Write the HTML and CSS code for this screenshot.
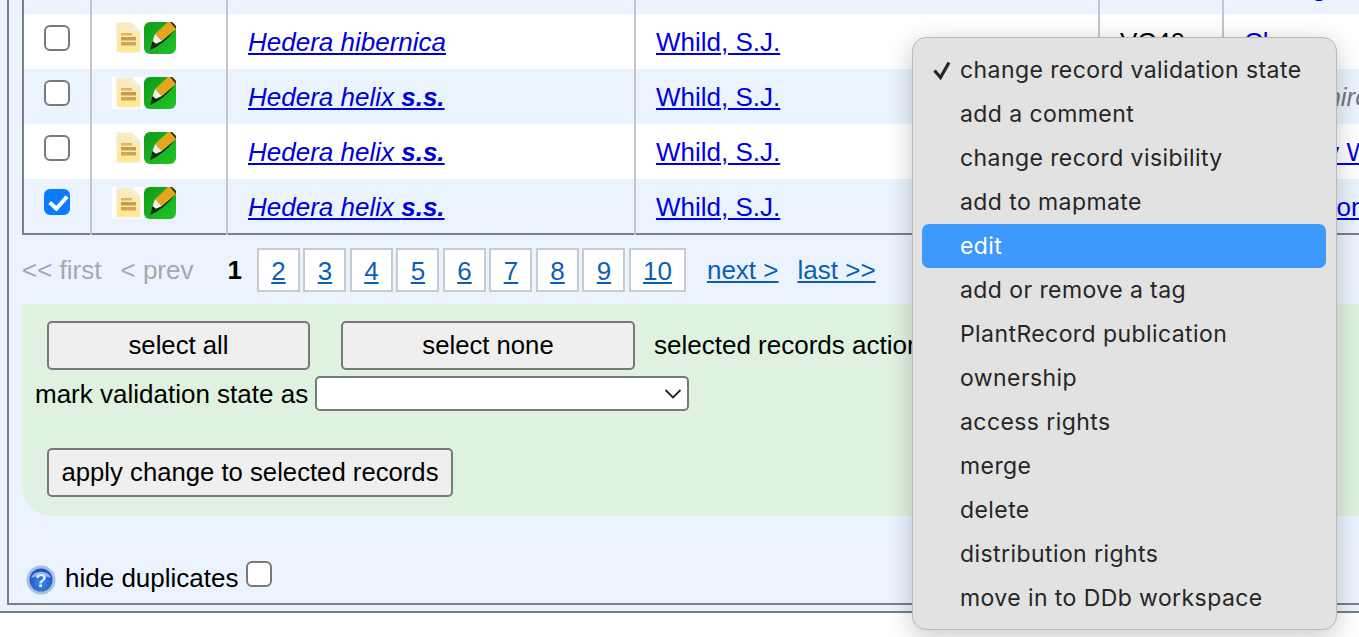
FILE: index.html
```html
<!DOCTYPE html>
<html lang="en">
<head>
  <meta charset="UTF-8" />
  <title>Records</title>
  <link rel="stylesheet" href="styles.css">
</head>
<body>
  <svg class="sprites" width="0" height="0" aria-hidden="true">
    <defs>
      <linearGradient id="paper" x1="0" y1="0" x2="0" y2="1">
        <stop offset="0" stop-color="#f8edc6"/>
        <stop offset="1" stop-color="#ffe98a"/>
      </linearGradient>
      <linearGradient id="leaf" x1="0" y1="0" x2="1" y2="1">
        <stop offset="0" stop-color="#0f9a16"/>
        <stop offset="1" stop-color="#22c42a"/>
      </linearGradient>
      <radialGradient id="orb" cx=".5" cy=".65" r=".6">
        <stop offset="0" stop-color="#3f8df0"/>
        <stop offset="1" stop-color="#1a52b4"/>
      </radialGradient>
    </defs>
    <symbol id="note" viewBox="0 0 32 32">
      <rect width="32" height="32" fill="#fff"/>
      <path d="M5 1h15l8 8v21H5z" fill="url(#paper)" stroke="#f1e8cf"/>
      <path d="M20 1v8h8z" fill="#f6efdc"/>
      <path d="M9 11h11v2.500H9z" fill="#d9b470"/>
      <path d="M9 15h15v3.500H9z" fill="#c99a4e"/>
      <path d="M9 20h15v3.500H9z" fill="#cfa45c"/>
    </symbol>
    <symbol id="pencil" viewBox="0 0 32 32">
      <rect width="32" height="32" rx="6" fill="url(#leaf)"/>
      <path d="M6 28Q9 17 16 11L30 9Q20 22 6 28z" fill="#06300a"/>
      <path d="M11 12 24 0h3l5 5v2L18 19z" fill="#e6a51f"/>
      <path d="M26 0h2l4 4v3z" fill="#3d2c12"/>
      <path d="M7 24l4-12 7 7z" fill="#f3efe2"/>
      <path d="M7 24l1.500-5 3.500 3z" fill="#111"/>
    </symbol>
  </svg>

  <div class="page">
    <div class="panel">
      <table class="records">
        <colgroup>
          <col class="c-check"><col class="c-icons"><col class="c-taxon"><col class="c-who"><col class="c-vc"><col class="c-site">
        </colgroup>
        <tr class="stub"><td></td><td></td><td></td><td></td><td></td><td><a class="clip-up" href="#">Stanage</a></td></tr>
        <tr>
          <td class="mid"><input type="checkbox"></td>
          <td class="icons"><svg class="icon"><use href="#note"/></svg><svg class="icon"><use href="#pencil"/></svg></td>
          <td><a class="taxon" href="#">Hedera hibernica</a></td>
          <td><a href="#">Whild, S.J.</a></td>
          <td>VC40</td>
          <td><a href="#">Clun</a></td>
        </tr>
        <tr class="alt">
          <td class="mid"><input type="checkbox"></td>
          <td class="icons"><svg class="icon"><use href="#note"/></svg><svg class="icon"><use href="#pencil"/></svg></td>
          <td><a class="taxon" href="#">Hedera helix <b>s.s.</b></a></td>
          <td><a href="#">Whild, S.J.</a></td>
          <td>VC40</td>
          <td><em>Shropshire</em></td>
        </tr>
        <tr>
          <td class="mid"><input type="checkbox"></td>
          <td class="icons"><svg class="icon"><use href="#note"/></svg><svg class="icon"><use href="#pencil"/></svg></td>
          <td><a class="taxon" href="#">Hedera helix <b>s.s.</b></a></td>
          <td><a href="#">Whild, S.J.</a></td>
          <td>VC40</td>
          <td><a href="#">Bromley Wood</a></td>
        </tr>
        <tr class="alt">
          <td class="mid"><input type="checkbox" checked></td>
          <td class="icons"><svg class="icon"><use href="#note"/></svg><svg class="icon"><use href="#pencil"/></svg></td>
          <td><a class="taxon" href="#">Hedera helix <b>s.s.</b></a></td>
          <td><a href="#">Whild, S.J.</a></td>
          <td>VC40</td>
          <td><a href="#">Harrington</a></td>
        </tr>
      </table>

      <div class="pager">
        <span class="off">&lt;&lt; first</span>
        <span class="off prev">&lt; prev</span>
        <b class="cur">1</b>
        <a class="num" href="#">2</a><a class="num" href="#">3</a><a class="num" href="#">4</a><a class="num" href="#">5</a><a class="num" href="#">6</a><a class="num" href="#">7</a><a class="num" href="#">8</a><a class="num" href="#">9</a><a class="num n10" href="#">10</a>
        <a class="step first-step" href="#">next &gt;</a>
        <a class="step" href="#">last &gt;&gt;</a>
      </div>

      <div class="actions">
        <div class="btn-row">
          <button class="btn b-all" type="button">select all</button>
          <button class="btn b-none" type="button">select none</button>
          <span class="act-label">selected records action</span>
        </div>
        <div class="state-row">
          <label for="state">mark validation state as</label>
          <span class="select-wrap">
            <select id="state"><option></option></select>
            <svg class="chevron" width="18" height="10" viewBox="0 0 18 10"><path d="M1.500 1l7.500 7.500L16.500 1" fill="none" stroke="#222" stroke-width="1.800"/></svg>
          </span>
        </div>
        <button class="btn b-apply" type="button">apply change to selected records</button>
      </div>

      <div class="dupes">
        <svg class="help" width="30" height="30" viewBox="0 0 30 30">
          <circle cx="15" cy="15" r="14.500" fill="#a8c2dc"/>
          <circle cx="15" cy="15" r="11.500" fill="url(#orb)"/>
          <path d="M5 13a10.500 9 0 0 1 20 0q-10-4-20 0z" fill="#8db4ee"/>
          <text x="15" y="22" text-anchor="middle" class="help-q">?</text>
        </svg>
        <span>hide duplicates</span>
        <input type="checkbox">
      </div>
    </div>
  </div>

  <ul class="menu">
    <li>
      <svg class="tick" width="20" height="20" viewBox="0 0 20 20"><path d="M2.500 10.500l6 7L17 2.500" fill="none" stroke="#262626" stroke-width="3.200"/></svg>
      change record validation state
    </li>
    <li>add a comment</li>
    <li>change record visibility</li>
    <li>add to mapmate</li>
    <li class="hot">edit</li>
    <li>add or remove a tag</li>
    <li>PlantRecord publication</li>
    <li>ownership</li>
    <li>access rights</li>
    <li>merge</li>
    <li>delete</li>
    <li>distribution rights</li>
    <li>move in to DDb workspace</li>
  </ul>
</body>
</html>
```

FILE: styles.css
```css
html, body { margin: 0; height: 637px; overflow: hidden; background: #fff; }
body { font-family: "Liberation Sans", Arial, sans-serif; font-size: 26px; color: #000; position: relative; }
a { color: #0000e6; }
.sprites { position: absolute; }

.page { background: #ebf4fe; border-bottom: 2px solid #7b7f85; height: 611px; width: 1400px; }
.panel { margin-left: 7px; height: 603px; border-left: 2px solid #7b7f85; border-bottom: 2px solid #7b7f85; padding-left: 13px; }

.records { border-collapse: collapse; table-layout: fixed; width: 1400px; background: #fff; border-left: 2px solid #7b7f85; border-bottom: 2px solid #7b7f85; }
.c-check { width: 68px; }
.c-icons { width: 136px; }
.c-taxon { width: 408px; }
.c-who { width: 464px; }
.c-vc { width: 124px; }
.records td { border-left: 2px solid #c3c6cb; padding: 2px 0 0 20px; height: 55px; box-sizing: border-box; vertical-align: middle; overflow: hidden; white-space: nowrap; }
.records td:first-child { border-left: 0; padding: 0; }
.records td.mid { text-align: center; }
.records .stub { background: #ebf4fe; }
.records .stub td { height: 14px; padding-top: 0; vertical-align: top; line-height: 14px; }
.records .alt { background: #ebf4fe; }
.records td.icons { padding: 0 0 0 20px; vertical-align: top; }
.records td em { color: #777; }
.clip-up { display: block; height: 30px; line-height: 30px; margin-top: -28px; }
.taxon { font-style: italic; color: #0000d8; }

input[type="checkbox"] { appearance: none; width: 26px; height: 26px; margin: 0; border: 2px solid #77797c; border-radius: 6px; background: #fff; box-sizing: border-box; vertical-align: middle; }
input[type="checkbox"]:checked { background: #0a7cff; border-color: #0a7cff; }
input[type="checkbox"]:checked::after { content: ""; display: block; width: 7px; height: 14px; margin: 1px 0 0 7px; border: solid #fff; border-width: 0 4px 4px 0; transform: rotate(42deg); }
.mid input { margin-top: -11px; }

.icon { display: inline-block; vertical-align: top; width: 32px; height: 32px; margin-top: 8px; filter: blur(.4px); }

.pager { display: flex; align-items: center; height: 69px; padding-top: 2px; box-sizing: border-box; }
.pager .off { color: #a5a8ad; }
.pager .prev { margin-left: 19px; }
.pager .cur { margin-left: 34px; margin-right: 15px; }
.num { width: 43px; height: 44px; border: 2px solid #c8ccd0; background: #fff; color: #0a5fb4; text-align: center; line-height: 42px; margin: -2px 3.500px 0 0; display: block; box-sizing: border-box; flex: none; }
.n10 { width: 57px; }
.step { color: #0a5fb4; margin-left: 19px; }
.first-step { margin-left: 17.500px; }

.actions { background: #dff2df; height: 212px; width: 1400px; border-bottom-left-radius: 30px; box-sizing: border-box; padding: 17px 0 0 25px; }
.btn { font: inherit; font-size: 25.700px; background: #efefef; border: 2px solid #77797c; border-radius: 5px; height: 49px; padding: 0; color: #000; box-sizing: border-box; display: block; }
.btn-row { display: flex; align-items: center; }
.b-all { width: 263px; }
.b-none { width: 294px; margin-left: 31px; }
.act-label { margin-left: 19px; white-space: nowrap; }
.state-row { display: flex; align-items: center; margin: 6px 0 0 -12px; }
.state-row label { margin-top: 2px; }
.select-wrap { position: relative; margin-left: 7px; display: block; height: 35px; }
.select-wrap select { appearance: none; width: 374px; height: 35px; background: #fff; border: 2px solid #77797c; border-radius: 5px; box-sizing: border-box; display: block; }
.chevron { position: absolute; right: 7px; top: 13px; }
.b-apply { margin-top: 37px; padding: 0 12.500px; }

.dupes { display: flex; align-items: center; margin-top: 49px; margin-left: 4px; }
.dupes span { margin: -4px 0 0 9px; }
.dupes input { margin: -12px 0 0 8px; }
.help { filter: blur(.4px); }
.help-q { font: bold 19px "Liberation Sans", sans-serif; fill: #e3edfb; }

.menu { position: absolute; left: 912px; top: 37px; width: 425px; height: 593px; margin: 0; padding: 10px 10px 0 9px; list-style: none; box-sizing: border-box; background: #e2e2e2; border: 1px solid #b9b9b9; border-radius: 14px; box-shadow: 0 6px 26px rgba(0,0,0,.22); font-family: Inter, "Noto Sans", sans-serif; font-size: 23px; letter-spacing: .42px; color: #262626; }
.menu li { height: 44px; line-height: 44px; padding-left: 38px; border-radius: 7px; position: relative; white-space: nowrap; }
.menu .hot { background: #3d99fd; color: #fff; }
.tick { position: absolute; left: 10px; top: 12px; }
```
